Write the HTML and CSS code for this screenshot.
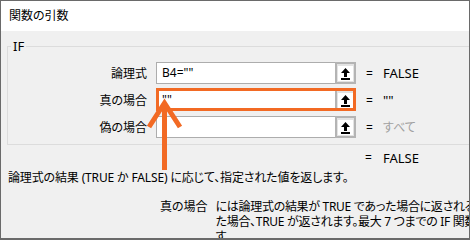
FILE: index.html
```html
<!DOCTYPE html>
<html lang="ja">
<head>
<meta charset="utf-8">
<title>関数の引数</title>
<link rel="stylesheet" href="styles.css">
</head>
<body>
<div class="window">
  <div class="titlebar">関数の引数</div>
  <div class="body">
    <fieldset class="group">
      <legend class="legend">IF</legend>
      <div class="rows">
        <div class="row">
          <span class="label">論理式</span>
          <div class="field">
            <span class="value">B4=""</span>
            <span class="btn"><span class="btn-face"><svg class="icon" viewBox="0 0 11 13" width="11" height="13"><path d="M5.5 1 L10 6 L7 6 L7 10 L4 10 L4 6 L1 6 Z" fill="#000"/><rect x="1" y="11" width="9" height="2" fill="#000"/></svg></span></span>
          </div>
          <span class="eq">=</span>
          <span class="result">FALSE</span>
        </div>
        <div class="row">
          <span class="label">真の場合</span>
          <div class="field field-active">
            <span class="value">""</span>
            <span class="btn"><span class="btn-face"><svg class="icon" viewBox="0 0 11 13" width="11" height="13"><path d="M5.5 1 L10 6 L7 6 L7 10 L4 10 L4 6 L1 6 Z" fill="#000"/><rect x="1" y="11" width="9" height="2" fill="#000"/></svg></span></span>
            <span class="highlight"></span>
          </div>
          <span class="eq">=</span>
          <span class="result">""</span>
        </div>
        <div class="row">
          <span class="label">偽の場合</span>
          <div class="field">
            <span class="value"></span>
            <span class="btn"><span class="btn-face"><svg class="icon" viewBox="0 0 11 13" width="11" height="13"><path d="M5.5 1 L10 6 L7 6 L7 10 L4 10 L4 6 L1 6 Z" fill="#000"/><rect x="1" y="11" width="9" height="2" fill="#000"/></svg></span></span>
          </div>
          <span class="eq">=</span>
          <span class="result result-muted">すべて</span>
        </div>
      </div>
    </fieldset>
    <div class="total">
      <span class="eq">=</span>
      <span class="result">FALSE</span>
    </div>
    <p class="summary">論理式の結果 (TRUE か FALSE) に応じて、指定された値を返します。</p>
    <div class="desc">
      <span class="desc-label">真の場合</span>
      <p class="desc-text">には論理式の結果が TRUE であった場合に返される値を指定します。省略され<br>た場合、TRUE が返されます。最大 7 つまでの IF 関数をネストすることができま<br>す。</p>
    </div>
  </div>
  <svg class="annot" width="470" height="240" viewBox="0 0 470 240">
    <g stroke="#f26a24" stroke-width="5" fill="none">
      <line x1="164.5" y1="104" x2="164.5" y2="170"/>
      <polyline points="149,127 164.5,103 180,127" stroke-linejoin="miter"/>
    </g>
  </svg>
</div>
</body>
</html>
```
FILE: styles.css
```css
* { box-sizing: border-box; }
html, body { margin: 0; padding: 0; }
body {
  width: 470px;
  height: 240px;
  overflow: hidden;
  background: #f0f0f0;
  font-family: "Noto Sans", "Noto Sans CJK JP", sans-serif;
  font-size: 12px;
  color: #000;
  font-feature-settings: "palt" 1;
}
.window {
  position: relative;
  width: 470px;
  height: 240px;
  border: 1px solid #6a6a6a;
  border-bottom-width: 2px;
  background: #f0f0f0;
  overflow: hidden;
}
.titlebar {
  height: 30px;
  background: #fff;
  padding-left: 8px;
  line-height: 30px;
  font-size: 12px;
}
.body {
  padding: 9px 0 0 6px;
}
.group {
  margin: 0 -20px 0 0;
  padding: 10px 0 6px 0;
  border: 1px solid #dcdcdc;
  min-width: 0;
}
.legend {
  margin-left: 3px;
  padding: 0 2px;
  font-size: 13px;
  line-height: 12px;
}
.rows {
  display: flex;
  flex-direction: column;
  gap: 5px;
}
.row {
  display: grid;
  grid-template-columns: 139px 200px 8px auto;
  column-gap: 9px;
  align-items: center;
  height: 22px;
}
.row .eq { margin-left: 1px; }
.label {
  text-align: right;
}
.field {
  position: relative;
  display: flex;
  height: 22px;
  background: #fff;
  border: 1px solid #adadad;
}
.value {
  flex: 1;
  padding-left: 5px;
  line-height: 20px;
}
.btn {
  width: 21px;
  margin: -1px -1px -1px 0;
  border: 2px solid #b4b4b4;
  background: #e3e3e3;
  display: flex;
  align-items: center;
  justify-content: center;
}
.btn-face {
  width: 15px;
  height: 15px;
  background: #fff;
  display: flex;
  align-items: center;
  justify-content: center;
}
.icon { display: block; }
.highlight {
  position: absolute;
  left: -1px;
  right: -1px;
  top: -2px;
  bottom: -1px;
  border: 3px solid #f26a24;
}
.eq {
  text-align: left;
}
.result {
  font-size: 13px;
  margin-left: 1px;
}
.result-muted {
  color: #a0a0a0;
  font-size: 12px;
}
.total {
  display: grid;
  grid-template-columns: 8px auto;
  column-gap: 9px;
  margin: 5px 0 0 358px;
  line-height: 16px;
}
.summary {
  margin: 4px 0 0 1px;
  line-height: 16px;
  white-space: nowrap;
  letter-spacing: -0.15px;
}
.desc {
  display: flex;
  gap: 8px;
  margin: 13px 0 0 153px;
  line-height: 15px;
}
.desc-label { white-space: nowrap; }
.desc-text {
  margin: 0;
  white-space: nowrap;
  letter-spacing: -0.3px;
}
.annot {
  position: absolute;
  left: -1px;
  top: -1px;
  pointer-events: none;
}
```
